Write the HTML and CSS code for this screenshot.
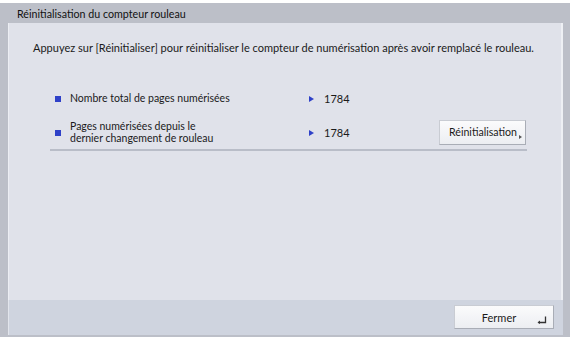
FILE: index.html
```html
<!DOCTYPE html>
<html lang="fr">
<head>
<meta charset="utf-8">
<link rel="stylesheet" href="styles.css">
</head>
<body>
<div class="window">
  <div class="titlebar">Réinitialisation du compteur rouleau</div>
  <div class="panel">
    <p class="intro">Appuyez sur [Réinitialiser] pour réinitialiser le compteur de numérisation après avoir remplacé le rouleau.</p>
    <div class="rows">
      <div class="row">
        <span class="bullet"></span>
        <span class="label">Nombre total de pages numérisées</span>
        <span class="tri"></span>
        <span class="value">1784</span>
      </div>
      <div class="row row2">
        <span class="bullet"></span>
        <span class="label">Pages numérisées depuis le<br>dernier changement de rouleau</span>
        <span class="tri"></span>
        <span class="value">1784</span>
        <button class="btn reset">Réinitialisation<span class="small-tri"></span></button>
      </div>
    </div>
  </div>
  <div class="footer">
    <button class="btn close">Fermer
      <svg class="enter" width="10" height="8" viewBox="0 0 10 8"><path d="M8.5 0.5 V6.5 H1.5" fill="none" stroke="#333" stroke-width="1.3"/><path d="M0.5 6.5 L3 4.5 V8 Z" fill="#333"/></svg>
    </button>
  </div>
</div>
</body>
</html>
```
FILE: styles.css
```css
html, body {
  margin: 0;
  padding: 0;
  background: #ffffff;
}
body {
  font-family: "Lato", "Noto Sans", sans-serif;
  color: #1a1a1a;
  width: 570px;
  height: 337px;
  overflow: hidden;
}
.window {
  margin-top: 3px;
  background: #bcbfc8;
  display: flex;
  flex-direction: column;
  padding: 0 7px 2px 8px;
  box-sizing: border-box;
  height: 334px;
}
.titlebar {
  height: 20px;
  line-height: 21px;
  font-size: 10.7px;
  padding-left: 9px;
  color: #111;
}
.panel {
  flex: 0 0 277px;
  background: #e0e2ea;
  border-left: 1px solid #eceef3;
  border-right: 2px solid #eef0f4;
  box-sizing: border-box;
  padding: 17px 0 0 24px;
}
.intro {
  margin: 0;
  font-size: 11px;
  line-height: 16px;
  white-space: nowrap;
}
.rows {
  margin-top: 26px;
  margin-left: 17px;
  width: 477px;
  border-bottom: 2px solid #b9bdc8;
}
.row {
  display: flex;
  align-items: center;
  height: 34px;
  font-size: 10.5px;
  line-height: 11.5px;
}
.row2 {
  height: 33px;
}
.bullet {
  width: 6px;
  height: 6px;
  background: #2f41c8;
  margin: 0 9px 0 5px;
  flex: none;
}
.label {
  width: 239px;
  flex: none;
}
.tri {
  width: 0;
  height: 0;
  border-left: 5px solid #2f41c8;
  border-top: 3.5px solid transparent;
  border-bottom: 3.5px solid transparent;
  margin-right: 10px;
  flex: none;
}
.value {
  width: 117px;
  flex: none;
  font-size: 11px;
}
.btn {
  font-family: "Lato", "Noto Sans", sans-serif;
  background: linear-gradient(#fbfbfc, #eceef2);
  border: 1px solid #c9ccd3;
  border-bottom: 1px solid #a9adb6;
  border-right: 1px solid #a9adb6;
  color: #1a1a1a;
  padding: 0;
  cursor: default;
  white-space: nowrap;
}
.reset {
  width: 87px;
  height: 25px;
  font-size: 10.6px;
  text-align: left;
  padding-left: 9px;
  margin-left: -2px;
}
.small-tri {
  display: inline-block;
  width: 0;
  height: 0;
  border-left: 3px solid #555;
  border-top: 2.5px solid transparent;
  border-bottom: 2.5px solid transparent;
  margin-left: 2px;
  vertical-align: -3px;
}
.footer {
  flex: 1;
  background: #cfd4df;
  border-left: 1px solid #e2e5ec;
  display: flex;
  justify-content: flex-end;
  align-items: flex-start;
  padding: 5px 9px 0 0;
}
.close {
  width: 100px;
  height: 24px;
  font-size: 11px;
  position: relative;
  padding-right: 10px;
}
.enter {
  position: absolute;
  right: 6px;
  bottom: 4px;
}
```
